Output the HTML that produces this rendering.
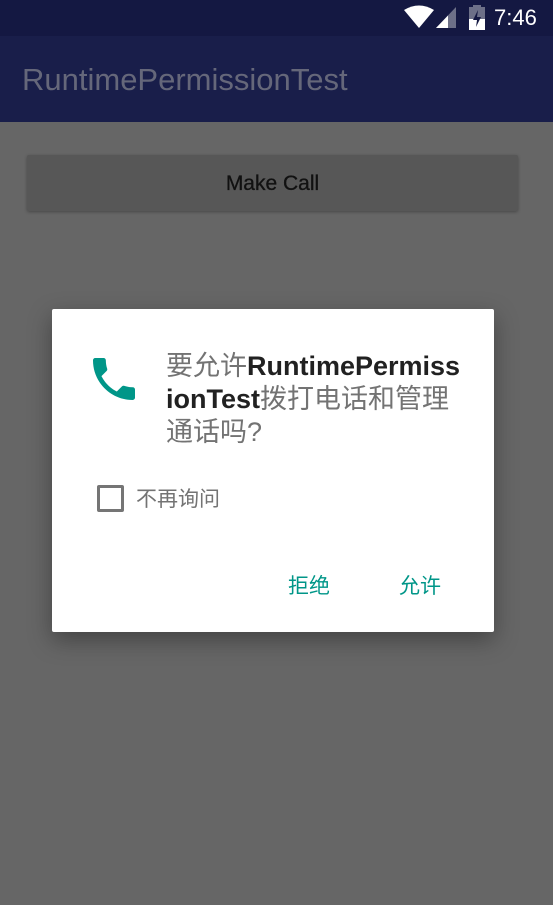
<!DOCTYPE html>
<html><head><meta charset="utf-8"><style>
*{margin:0;padding:0;box-sizing:border-box}
body{width:553px;height:905px;background:#666;position:relative;overflow:hidden;font-family:"Liberation Sans","Noto Sans CJK SC",sans-serif}
.sb{position:absolute;left:0;top:0;width:553px;height:36px;background:#141842}
.ab{position:absolute;left:0;top:36px;width:553px;height:86px;background:#191e4a}
.ab span{position:absolute;left:22px;top:26px;font-size:31px;color:#65677a}
.btn{position:absolute;left:27px;top:155px;width:491px;height:56px;background:#575757;border-radius:2px;box-shadow:0 1px 3px rgba(0,0,0,.3);text-align:center;line-height:58px;font-size:21px;color:#111;-webkit-text-stroke:.3px #111}
.dlg{position:absolute;left:52px;top:309px;width:442px;height:323px;background:#fff;border-radius:2px;box-shadow:0 8px 24px rgba(0,0,0,.35)}
.t{position:absolute;left:114px;top:41px;font-size:27px;line-height:33px;color:#737373;white-space:nowrap}
.t b{color:#212121}
.cb{position:absolute;left:45px;top:176px;width:27px;height:27px;border:3px solid #757575;border-radius:2px}
.cl{position:absolute;left:84px;top:174px;font-size:21px;color:#737373}
.a{position:absolute;top:261px;font-size:21px;color:#009688}
</style></head><body>
<div class="sb">
<svg style="position:absolute;left:404px;top:5px" width="30" height="24" viewBox="0 0 30 24"><path d="M0 5 Q15 -4 30 5 L15 23Z" fill="#fff"/></svg>
<svg style="position:absolute;left:436px;top:7px" width="20" height="22"><path d="M0 21 L20 0 V21Z" fill="#6d7088"/><path d="M0 21 L12 8.5 V21Z" fill="#fff"/></svg>
<svg style="position:absolute;left:469px;top:5px" width="16" height="25"><rect x="4" y="0" width="8" height="3" fill="#6d7088"/><rect x="0" y="2" width="16" height="23" fill="#6d7088"/><rect x="0" y="14" width="16" height="11" fill="#fff"/><path d="M9 5 L4 15 H8 L7 22 L12 12 H8Z" fill="#141842"/></svg>
<div style="position:absolute;left:494px;top:5px;font-size:22px;color:#fff">7:46</div>
</div>
<div class="ab"><span>RuntimePermissionTest</span></div>
<div class="btn">Make Call</div>
<div class="dlg">
<svg style="position:absolute;left:34px;top:42px" width="56" height="56" viewBox="0 0 24 24"><path d="M6.62 10.79c1.44 2.830 3.76 5.14 6.59 6.59l2.2-2.2c.27-.27.67-.36 1.02-.24 1.12.37 2.33.57 3.57.57.55 0 1 .45 1 1V20c0 .55-.45 1-1 1-9.39 0-17-7.61-17-17 0-.55.45-1 1-1h3.5c.55 0 1 .45 1 1 0 1.25.2 2.45.57 3.570.11.35.03.74-.25 1.02l-2.2 2.2z" fill="#009688"/></svg>
<div class="t">要允许<b>RuntimePermiss</b><br><b>ionTest</b>拨打电话和管理<br>通话吗?</div>
<div class="cb"></div>
<div class="cl">不再询问</div>
<div class="a" style="left:236px">拒绝</div>
<div class="a" style="left:347px">允许</div>
</div>
</body></html>
